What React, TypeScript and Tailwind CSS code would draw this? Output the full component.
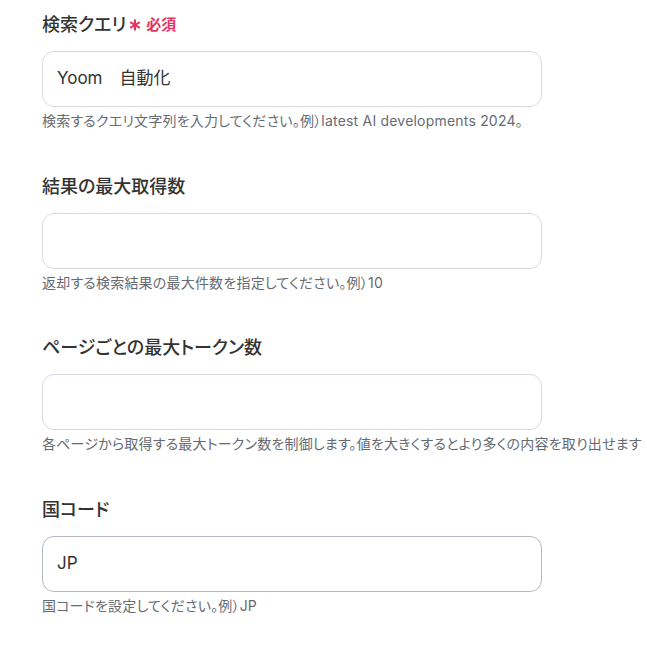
const fields = [
  { label: '検索クエリ', required: true, value: 'Yoom　自動化', help: '検索するクエリ文字列を入力してください。例）latest AI developments 2024。' },
  { label: '結果の最大取得数', required: false, value: '', help: '返却する検索結果の最大件数を指定してください。例）10' },
  { label: 'ページごとの最大トークン数', required: false, value: '', help: '各ページから取得する最大トークン数を制御します。値を大きくするとより多くの内容を取り出せます' },
  { label: '国コード', required: false, value: 'JP', help: '国コードを設定してください。例）JP', active: true },
];

const Asterisk = () => (
  <svg width="12" height="12" viewBox="0 0 12 12" className="text-[#e5335f]">
    <g stroke="currentColor" strokeWidth="2" strokeLinecap="butt">
      <line x1="6" y1="0.5" x2="6" y2="11.5" />
      <line x1="1.2" y1="3.2" x2="10.8" y2="8.8" />
      <line x1="1.2" y1="8.8" x2="10.8" y2="3.2" />
    </g>
  </svg>
);

const App = () => {
  return (
    <div className="min-h-screen bg-white overflow-hidden pt-[13px] pl-[42px] font-['Inter','Noto_Sans_CJK_JP',sans-serif] text-[#333]">
      {fields.map((f) => (
        <div key={f.label} className="h-[161.5px]">
          <div className="flex items-center h-6 text-[18px] font-medium leading-6 [font-feature-settings:'palt']">
            <span>{f.label}</span>
            {f.required && (
              <span className="ml-[3px] flex items-center text-[#e5335f]">
                <Asterisk />
                <span className="ml-[5px] text-[15px] font-bold">必須</span>
              </span>
            )}
          </div>
          <div
            className={`mt-[14px] h-[56px] w-[500px] rounded-xl border bg-white flex items-center px-[14px] text-[17px] ${
              f.active ? 'border-[#b4bac4]' : 'border-[#d6dbe3]'
            }`}
          >
            {f.value}
          </div>
          <p className="mt-[5px] text-sm tracking-[0.2px] leading-[18px] text-[#666b73] whitespace-nowrap [font-feature-settings:'palt']">{f.help}</p>
        </div>
      ))}
    </div>
  );
};

export default App;
